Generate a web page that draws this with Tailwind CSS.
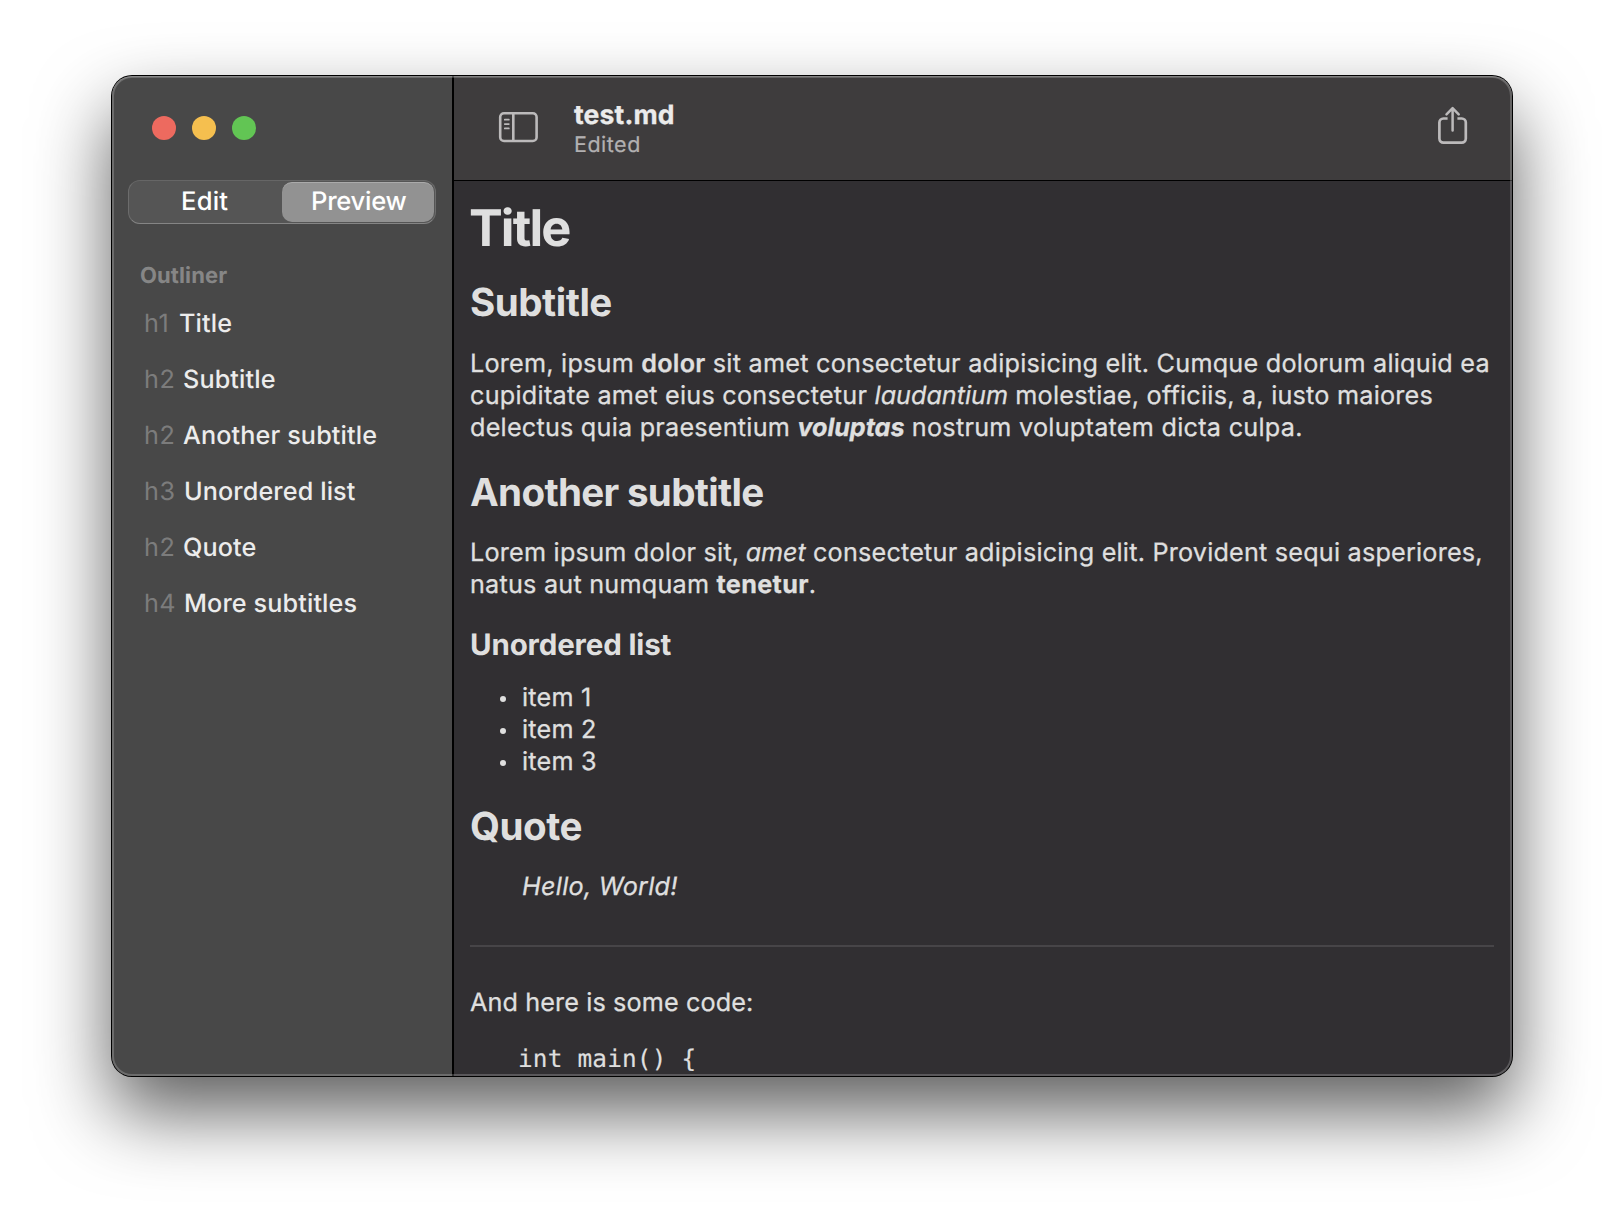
<!DOCTYPE html>
<html lang="en">
<head>
<meta charset="utf-8">
<title>test.md</title>
<script src="https://cdn.jsdelivr.net/npm/@tailwindcss/browser@4"></script>
</head>
<body class="h-[1224px] w-[1624px] overflow-hidden bg-white px-28 pt-[76px] font-[Inter,sans-serif] antialiased [text-rendering:geometricPrecision]">
<div class="relative flex h-[1000px] w-[1400px] rounded-[20px] bg-[#312f32] shadow-[0_0_0_1px_#000,0_36px_76px_rgba(0,0,0,0.64)]">

  <!-- Sidebar -->
  <aside class="flex w-[342px] shrink-0 flex-col rounded-l-[20px] border-r-2 border-black bg-[#484848]">
    <div class="flex gap-4 pt-10 pl-10">
      <span class="size-6 rounded-full bg-[#ed6a5f]"></span>
      <span class="size-6 rounded-full bg-[#f5bf4f]"></span>
      <span class="size-6 rounded-full bg-[#62c554]"></span>
    </div>
    <div class="mt-10 ml-4 flex h-11 w-[308px] rounded-[12px] border border-t-[#666] border-x-[#6c6c6c] border-b-[#858585] bg-[#555] p-px text-[25.6px] leading-[39px] font-medium text-white">
      <div class="w-[152px] pl-[51px] tracking-[0.2px]">Edit</div>
      <div class="h-10 w-[152px] rounded-[10px] border-t border-[#aaa] bg-[#929292] pl-[29px] leading-[37px] tracking-[-0.27px]">Preview</div>
    </div>
    <h2 class="mt-[38px] pl-7 text-[22px] leading-7 font-bold tracking-[0.1px] text-[#868686]">Outliner</h2>
    <ul class="mt-[6px] pl-8 text-[25.2px] leading-[56px] font-medium tracking-[0.12px] text-[#ececec]">
      <li class="flex"><span class="w-[35px] font-normal tracking-[0.6px] text-[#7c7c7c]">h1</span>Title</li>
      <li class="flex"><span class="w-[39px] font-normal tracking-[0.6px] text-[#7c7c7c]">h2</span>Subtitle</li>
      <li class="flex"><span class="w-[39px] font-normal tracking-[0.6px] text-[#7c7c7c]">h2</span>Another subtitle</li>
      <li class="flex"><span class="w-10 font-normal tracking-[0.6px] text-[#7c7c7c]">h3</span>Unordered list</li>
      <li class="flex"><span class="w-[39px] font-normal tracking-[0.6px] text-[#7c7c7c]">h2</span>Quote</li>
      <li class="flex"><span class="w-10 font-normal tracking-[0.3px] text-[#7c7c7c]">h4</span>More subtitles</li>
    </ul>
  </aside>

  <main class="flex min-w-0 flex-1 flex-col overflow-hidden rounded-r-[20px]">
    <!-- Toolbar -->
    <header class="flex h-[105px] shrink-0 border-b border-black bg-[#3e3c3d]">
      <svg class="mt-[35px] ml-[44px] h-8 w-10 shrink-0" viewBox="0 0 40 32" fill="none" stroke="#bcbabb" stroke-width="2.6" stroke-linecap="round">
        <rect x="2.2" y="2.2" width="36.4" height="27.8" rx="3.8"/>
        <path d="M15.3 2.2V30" stroke-linecap="butt"/>
        <path d="M6.8 8.7h4M6.8 13.1h4M6.8 17.4h4" stroke-width="1.8"/>
      </svg>
      <div class="mt-[23px] ml-[36px] flex-1">
        <div class="text-[26.5px] leading-8 font-bold tracking-[0.15px] text-[#ebebeb] [-webkit-text-stroke:0.3px]">test.md</div>
        <div class="text-[21.5px] leading-7 tracking-[0.5px] text-[#b2b0b1] [-webkit-text-stroke:0.2px]">Edited</div>
      </div>
      <svg class="mt-[30px] mr-[43px] h-10 w-8 shrink-0" viewBox="0 0 32 40" fill="none" stroke="#bcbabb" stroke-width="2.7" stroke-linecap="round" stroke-linejoin="round">
        <path d="M10.6 12.5H6.4a4 4 0 0 0-4 4V32.6a4 4 0 0 0 4 4H24.8a4 4 0 0 0 4-4V16.5a4 4 0 0 0-4-4H20.4" stroke-linecap="butt"/>
        <path d="M15.6 24.4V2.4M9.5 8.3l6.1-6.1 6.1 6.1" stroke-width="2.5"/>
      </svg>
    </header>

    <!-- Rendered document -->
    <article class="h-[895px] overflow-hidden pl-4 text-[25.2px] leading-8 tracking-[0.23px] whitespace-nowrap text-[#dfdfdf]">
      <h1 class="mt-[18px] -ml-px text-[50.6px] leading-[60px] font-bold tracking-[-1.9px]">Title</h1>
      <h2 class="mt-[21px] text-[38.6px] leading-[46px] font-bold tracking-[-0.5px]">Subtitle</h2>
      <p class="mt-[22px] [-webkit-text-stroke:0.3px]">Lorem, ipsum <b class="font-semibold">dolor</b> <span class="tracking-[0.25px]">sit amet consectetur adipisicing elit. Cumque dolorum aliquid ea</span><br><span class="tracking-[0.26px]">cupiditate amet eius consectetur</span> <i class="tracking-[-0.02px]">laudantium</i> molestiae, officiis, a, iusto maiores<br>delectus quia praesentium <b class="font-bold tracking-[-0.05px] italic">voluptas</b> <span class="tracking-[0.27px]">nostrum voluptatem dicta culpa.</span></p>
      <h2 class="mt-[26px] text-[38.6px] leading-[46px] font-bold tracking-[-0.7px]">Another subtitle</h2>
      <p class="mt-[21px] [-webkit-text-stroke:0.3px]">Lorem ipsum dolor sit, <i class="-ml-px tracking-[-0.07px]">amet</i> <span class="tracking-[0.21px]">consectetur adipisicing elit. Provident sequi asperiores,</span><br>natus aut numquam <b class="font-bold tracking-[0.35px]">tenetur</b>.</p>
      <h3 class="mt-[26px] text-[29.5px] leading-9 font-bold tracking-[-0.15px]">Unordered list</h3>
      <ul class="mt-[19px] [-webkit-text-stroke:0.3px]">
        <li class="flex items-center"><span class="mt-0.5 mr-4 ml-[30px] size-1.5 rounded-full bg-[#dfdfdf]"></span>item 1</li>
        <li class="flex items-center"><span class="mt-0.5 mr-4 ml-[30px] size-1.5 rounded-full bg-[#dfdfdf]"></span>item 2</li>
        <li class="flex items-center"><span class="mt-0.5 mr-4 ml-[30px] size-1.5 rounded-full bg-[#dfdfdf]"></span>item 3</li>
      </ul>
      <h2 class="mt-[26px] text-[38.6px] leading-[46px] font-bold tracking-[-0.45px]">Quote</h2>
      <blockquote class="mt-[21px] pl-[52px] tracking-[0.28px] italic [-webkit-text-stroke:0.3px]">Hello, World!</blockquote>
      <hr class="mt-[42px] mr-[18px] border-t-2 border-[#474548]">
      <p class="mt-10 tracking-[0.12px] [-webkit-text-stroke:0.3px]">And here is some code:</p>
      <pre class="mt-6 pl-12 font-['DejaVu_Sans_Mono',monospace] text-[24.4px] tracking-[0.17px] [-webkit-text-stroke:0.2px]">int main() {</pre>
    </article>
  </main>

  <!-- Window edge highlight -->
  <div class="pointer-events-none absolute inset-0 rounded-[20px] shadow-[inset_0_0_0_2px_rgba(255,255,255,0.2),inset_0_1px_0_0_rgba(255,255,255,0.2)]"></div>
</div>
</body>
</html>
